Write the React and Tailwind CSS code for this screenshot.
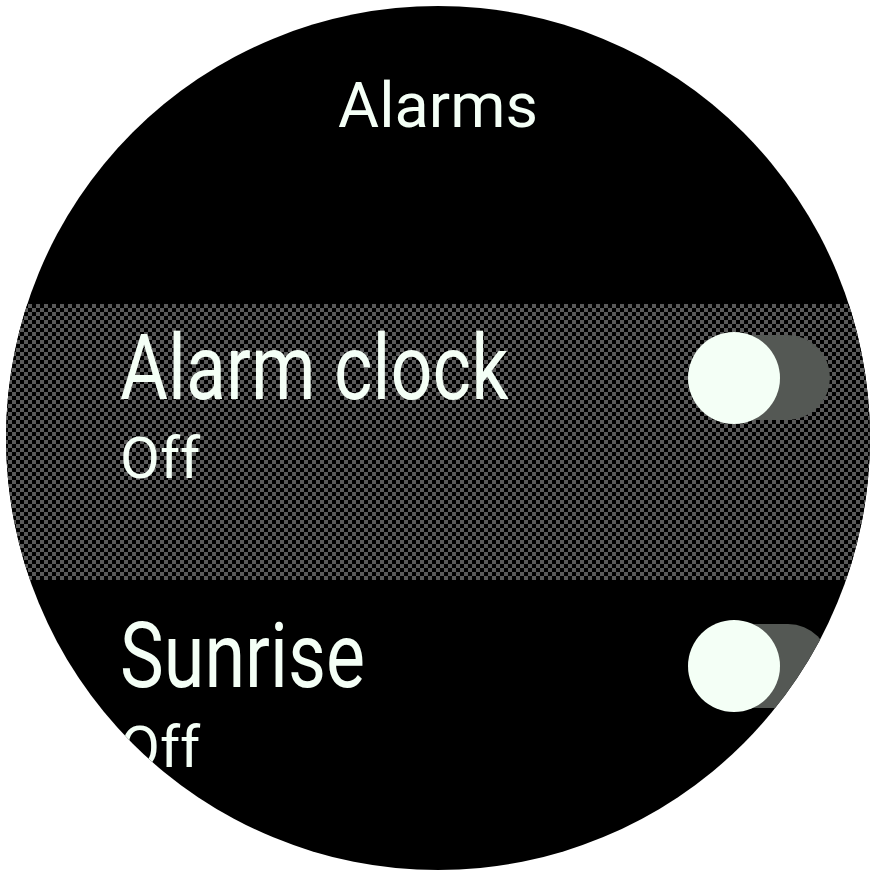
export default function App() {
  const font = { fontFamily: "Roboto, 'Noto Sans', sans-serif" };
  return (
    <div className="w-[872px] h-[872px] bg-white overflow-hidden pt-[6px] pl-[6px]" style={font}>
      <div className="w-[864px] h-[864px] rounded-full bg-black overflow-hidden text-[#f4fff6]">
        {/* header */}
        <div className="h-[298px] pt-[68px] flex justify-center">
          <div className="text-[63px] leading-[63px] whitespace-nowrap">Alarms</div>
        </div>

        {/* selected row */}
        <div className="h-[276px] flex bg-[image:conic-gradient(#5a5a5a_25%,#000000_0_50%,#5a5a5a_0_75%,#000000_0)] bg-[length:8px_8px] bg-[position:2px_0px]">
          <div className="flex-1 pl-[114px] pt-[19px]">
            <div className="text-[91px] leading-[91px] whitespace-nowrap scale-x-[0.81] origin-left">Alarm clock</div>
            <div className="mt-[15px] text-[58px] leading-[58px] whitespace-nowrap">Off</div>
          </div>
          <div className="relative w-[142px] h-[92px] mt-[28px] mr-[40px]">
            <div className="absolute left-[12px] top-[3px] w-[130px] h-[85px] rounded-full bg-[#545854]" />
            <div className="absolute left-0 top-0 w-[92px] h-[92px] rounded-full bg-[#f4fff6]" />
          </div>
        </div>

        {/* second row */}
        <div className="flex">
          <div className="flex-1 pl-[114px] pt-[31px]">
            <div className="text-[91px] leading-[91px] whitespace-nowrap scale-x-[0.81] origin-left">Sunrise</div>
            <div className="mt-[16px] text-[58px] leading-[58px] whitespace-nowrap">Off</div>
          </div>
          <div className="relative w-[142px] h-[92px] mt-[40px] mr-[40px]">
            <div className="absolute left-[12px] top-[4px] w-[130px] h-[84px] rounded-full bg-[#545854]" />
            <div className="absolute left-0 top-0 w-[92px] h-[92px] rounded-full bg-[#f4fff6]" />
          </div>
        </div>
      </div>
    </div>
  );
}
